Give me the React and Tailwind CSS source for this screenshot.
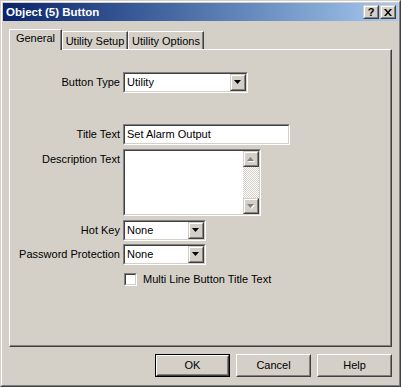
import React from 'react'

// Classic Win2000 3D edges
function Sunken({ className = '', children }) {
  return (
    <div className={`border border-t-[#808080] border-l-[#808080] border-b-white border-r-white ${className}`}>
      <div className="h-full w-full border border-t-[#404040] border-l-[#404040] border-b-[#d4d0c8] border-r-[#d4d0c8] bg-white flex">
        {children}
      </div>
    </div>
  )
}

function Raised({ className = '', light = false, children }) {
  const outer = light
    ? 'border-t-[#d4d0c8] border-l-[#d4d0c8]'
    : 'border-t-white border-l-white'
  const inner = light
    ? 'border-t-white border-l-white'
    : 'border-t-[#d4d0c8] border-l-[#d4d0c8]'
  return (
    <div className={`border ${outer} border-b-[#404040] border-r-[#404040] bg-[#d4d0c8] ${className}`}>
      <div className={`h-full w-full border ${inner} border-b-[#808080] border-r-[#808080] flex items-center justify-center`}>
        {children}
      </div>
    </div>
  )
}

function Arrow({ disabled = false, up = false }) {
  const pts = up ? '3.5,0 7,4 0,4' : '0,0 7,0 3.5,4'
  return (
    <svg width="8" height="5" viewBox="0 0 8 5">
      {disabled && <polygon points={up ? '4.5,1 8,5 1,5' : '1,1 8,1 4.5,5'} fill="#ffffff" />}
      <polygon points={pts} fill={disabled ? '#808080' : '#000000'} />
    </svg>
  )
}

function Combo({ value, width }) {
  return (
    <Sunken className={`h-[21px] ${width}`}>
      <div className="flex-1 pl-[2px] flex items-center leading-none">{value}</div>
      <Raised light className="w-[16px] h-full">
        <Arrow />
      </Raised>
    </Sunken>
  )
}

function Label({ children, top = false }) {
  return (
    <div className={`w-[110px] shrink-0 text-right ${top ? 'pt-[4px]' : ''}`}>{children}</div>
  )
}

function Tab({ label, selected, width }) {
  if (selected) {
    return (
      <div className={`relative z-10 -mb-px h-[21px] ${width} bg-[#d4d0c8] border-t border-l border-white border-r border-r-[#404040] shadow-[inset_-1px_0_0_#808080] flex items-center justify-center pb-[3px]`}>
        {label}
      </div>
    )
  }
  return (
    <div className={`h-[18px] ${width} border-t border-l border-white border-r border-r-[#404040] shadow-[inset_-1px_0_0_#808080] flex items-center justify-center pt-[2px]`}>
      {label}
    </div>
  )
}

function DialogButton({ label, isDefault }) {
  if (isDefault) {
    return (
      <div className="w-[75px] h-[23px] border border-black">
        <div className="h-full w-full border border-t-white border-l-white border-b-[#404040] border-r-[#404040]">
          <div className="h-full w-full border border-t-[#d4d0c8] border-l-[#d4d0c8] border-b-[#808080] border-r-[#808080] flex items-center justify-center">
            {label}
          </div>
        </div>
      </div>
    )
  }
  return (
    <Raised className="w-[75px] h-[23px]">{label}</Raised>
  )
}

export default function App() {
  return (
    <div className="w-[401px] h-[387px] bg-[#d4d0c8] text-black text-[11px] leading-[13px] font-['Liberation_Sans',Arial,sans-serif] border border-t-[#d4d0c8] border-l-[#d4d0c8] border-b-[#404040] border-r-[#404040]">
      <div className="h-full w-full border border-t-white border-l-white border-b-[#808080] border-r-[#808080] p-px flex flex-col">

        {/* Title bar */}
        <div className="h-[18px] shrink-0 bg-gradient-to-r from-[#0a246a] to-[#a6caf0] flex items-center pl-[3px] pr-[2px]">
          <span className="flex-1 text-white font-bold text-[11.5px]">Object (5) Button</span>
          <Raised light className="w-[16px] h-[14px]">
            <span className="font-bold text-[11px] leading-none">?</span>
          </Raised>
          <Raised light className="w-[16px] h-[14px] ml-[1px]">
            <svg width="8" height="7" viewBox="0 0 8 7">
              <path d="M0 0h2l2 2.5 2-2.5h2L5 3.5 8 7H6L4 4.5 2 7H0l3-3.5z" fill="#000" />
            </svg>
          </Raised>
        </div>

        {/* Body */}
        <div className="flex-1 px-[6px] pt-[8px] flex flex-col">
          <div className="flex items-end h-[20px]">
            <Tab label="General" selected width="w-[53px]" />
            <Tab label="Utility Setup" width="w-[66px]" />
            <Tab label="Utility Options" width="w-[76px]" />
          </div>

          <div className="h-[298px] border border-t-white border-l-white border-b-[#404040] border-r-[#404040] shadow-[inset_-1px_-1px_0_#808080] flex flex-col">
            <div className="flex items-center gap-[3px] mt-[22px]">
              <Label>Button Type</Label>
              <Combo value="Utility" width="w-[125px]" />
            </div>

            <div className="flex items-center gap-[3px] mt-[31px]">
              <Label>Title Text</Label>
              <Sunken className="w-[167px] h-[21px]">
                <div className="flex-1 pl-[2px] flex items-center">Set Alarm Output</div>
              </Sunken>
            </div>

            <div className="flex items-start gap-[3px] mt-[4px]">
              <Label top>Description Text</Label>
              <Sunken className="w-[138px] h-[67px]">
                <div className="flex-1" />
                <div className="w-[16px] h-full flex flex-col bg-[repeating-conic-gradient(#ffffff_0_25%,#d4d0c8_0_50%)] bg-[length:2px_2px]">
                  <Raised light className="w-[16px] h-[16px]">
                    <Arrow up disabled />
                  </Raised>
                  <div className="flex-1" />
                  <Raised light className="w-[16px] h-[16px]">
                    <Arrow disabled />
                  </Raised>
                </div>
              </Sunken>
            </div>

            <div className="flex items-center gap-[3px] mt-[4px]">
              <Label>Hot Key</Label>
              <Combo value="None" width="w-[83px]" />
            </div>

            <div className="flex items-center gap-[3px] mt-[3px]">
              <Label>Password Protection</Label>
              <Combo value="None" width="w-[83px]" />
            </div>

            <div className="flex items-center mt-[8px] ml-[114px]">
              <Sunken className="w-[13px] h-[13px]" />
              <span className="ml-[6px]">Multi Line Button Title Text</span>
            </div>
          </div>

          <div className="flex justify-end gap-[6px] mt-[7px]">
            <DialogButton label="OK" isDefault />
            <DialogButton label="Cancel" />
            <DialogButton label="Help" />
          </div>
        </div>
      </div>
    </div>
  )
}
